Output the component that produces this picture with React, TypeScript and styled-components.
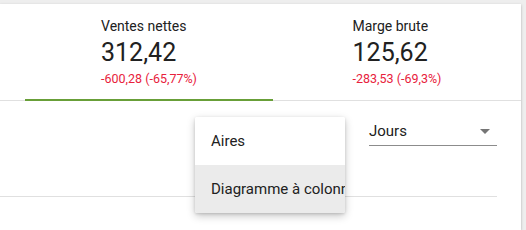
import styled, { createGlobalStyle } from 'styled-components';

const GlobalStyle = createGlobalStyle`
  html, body {
    margin: 0;
    padding: 0;
    background: #eeeeee;
    font-family: Roboto, 'Liberation Sans', sans-serif;
    color: #212121;
  }
  body {
    padding-top: 4px;
    overflow: hidden;
  }
`;

const Card = styled.div`
  position: relative;
  width: 521px;
  height: 226px;
  background: #fff;
  box-shadow: 0 1px 3px rgba(0, 0, 0, 0.18), 0 1px 2px rgba(0, 0, 0, 0.1);
`;

const TabRow = styled.div`
  display: flex;
  padding-left: 25px;
  border-bottom: 1px solid #e0e0e0;
  height: 96px;
`;

const Tab = styled.div<{ $active?: boolean }>`
  flex: 1;
  display: flex;
  justify-content: center;
  padding-top: 11px;
  box-sizing: border-box;
  border-bottom: 2px solid ${(p) => (p.$active ? '#689f38' : 'transparent')};
  margin-bottom: -1px;
`;

const TabInner = styled.div`
  display: flex;
  flex-direction: column;
`;

const Label = styled.div`
  font-size: 14px;
  line-height: 22px;
  color: #212121;
`;

const Value = styled.div`
  font-size: 25px;
  line-height: 32px;
  color: #212121;
`;

const Change = styled.div`
  font-size: 12.5px;
  line-height: 20px;
  color: #e8213c;
`;

const Controls = styled.div`
  display: flex;
  justify-content: flex-end;
  padding: 17px 24px 0 0;
`;

const Select = styled.div`
  width: 128px;
  height: 26px;
  display: flex;
  align-items: center;
  justify-content: space-between;
  border-bottom: 1px solid #8c8c8c;
  font-size: 15px;
  color: #212121;
  padding-bottom: 1px;
`;

const Arrow = styled.span`
  width: 0;
  height: 0;
  margin-right: 7px;
  border-left: 5px solid transparent;
  border-right: 5px solid transparent;
  border-top: 5px solid #757575;
`;

const Divider = styled.div`
  margin: 50px 24px 0 0;
  border-top: 1px solid #e0e0e0;
`;

const Menu = styled.div`
  position: absolute;
  left: 195px;
  top: 113px;
  width: 150px;
  background: #fff;
  overflow: hidden;
  border-radius: 2px;
  box-shadow: 0 3px 8px rgba(0, 0, 0, 0.22), 0 1px 3px rgba(0, 0, 0, 0.14);
`;

const MenuItem = styled.div<{ $hover?: boolean }>`
  height: 48px;
  display: flex;
  align-items: center;
  padding-left: 16px;
  white-space: nowrap;
  font-size: 15px;
  color: #212121;
  background: ${(p) => (p.$hover ? '#ebebeb' : '#fff')};
`;

const tabs = [
  { label: 'Ventes nettes', value: '312,42', change: '-600,28 (-65,77%)', active: true },
  { label: 'Marge brute', value: '125,62', change: '-283,53 (-69,3%)', active: false },
];

export default function App() {
  return (
    <>
      <GlobalStyle />
      <Card>
        <TabRow>
          {tabs.map((t) => (
            <Tab key={t.label} $active={t.active}>
              <TabInner>
                <Label>{t.label}</Label>
                <Value>{t.value}</Value>
                <Change>{t.change}</Change>
              </TabInner>
            </Tab>
          ))}
        </TabRow>
        <Controls>
          <Select>
            <span>Jours</span>
            <Arrow />
          </Select>
        </Controls>
        <Divider />
        <Menu>
          <MenuItem>Aires</MenuItem>
          <MenuItem $hover>Diagramme à colonnes</MenuItem>
        </Menu>
      </Card>
    </>
  );
}
